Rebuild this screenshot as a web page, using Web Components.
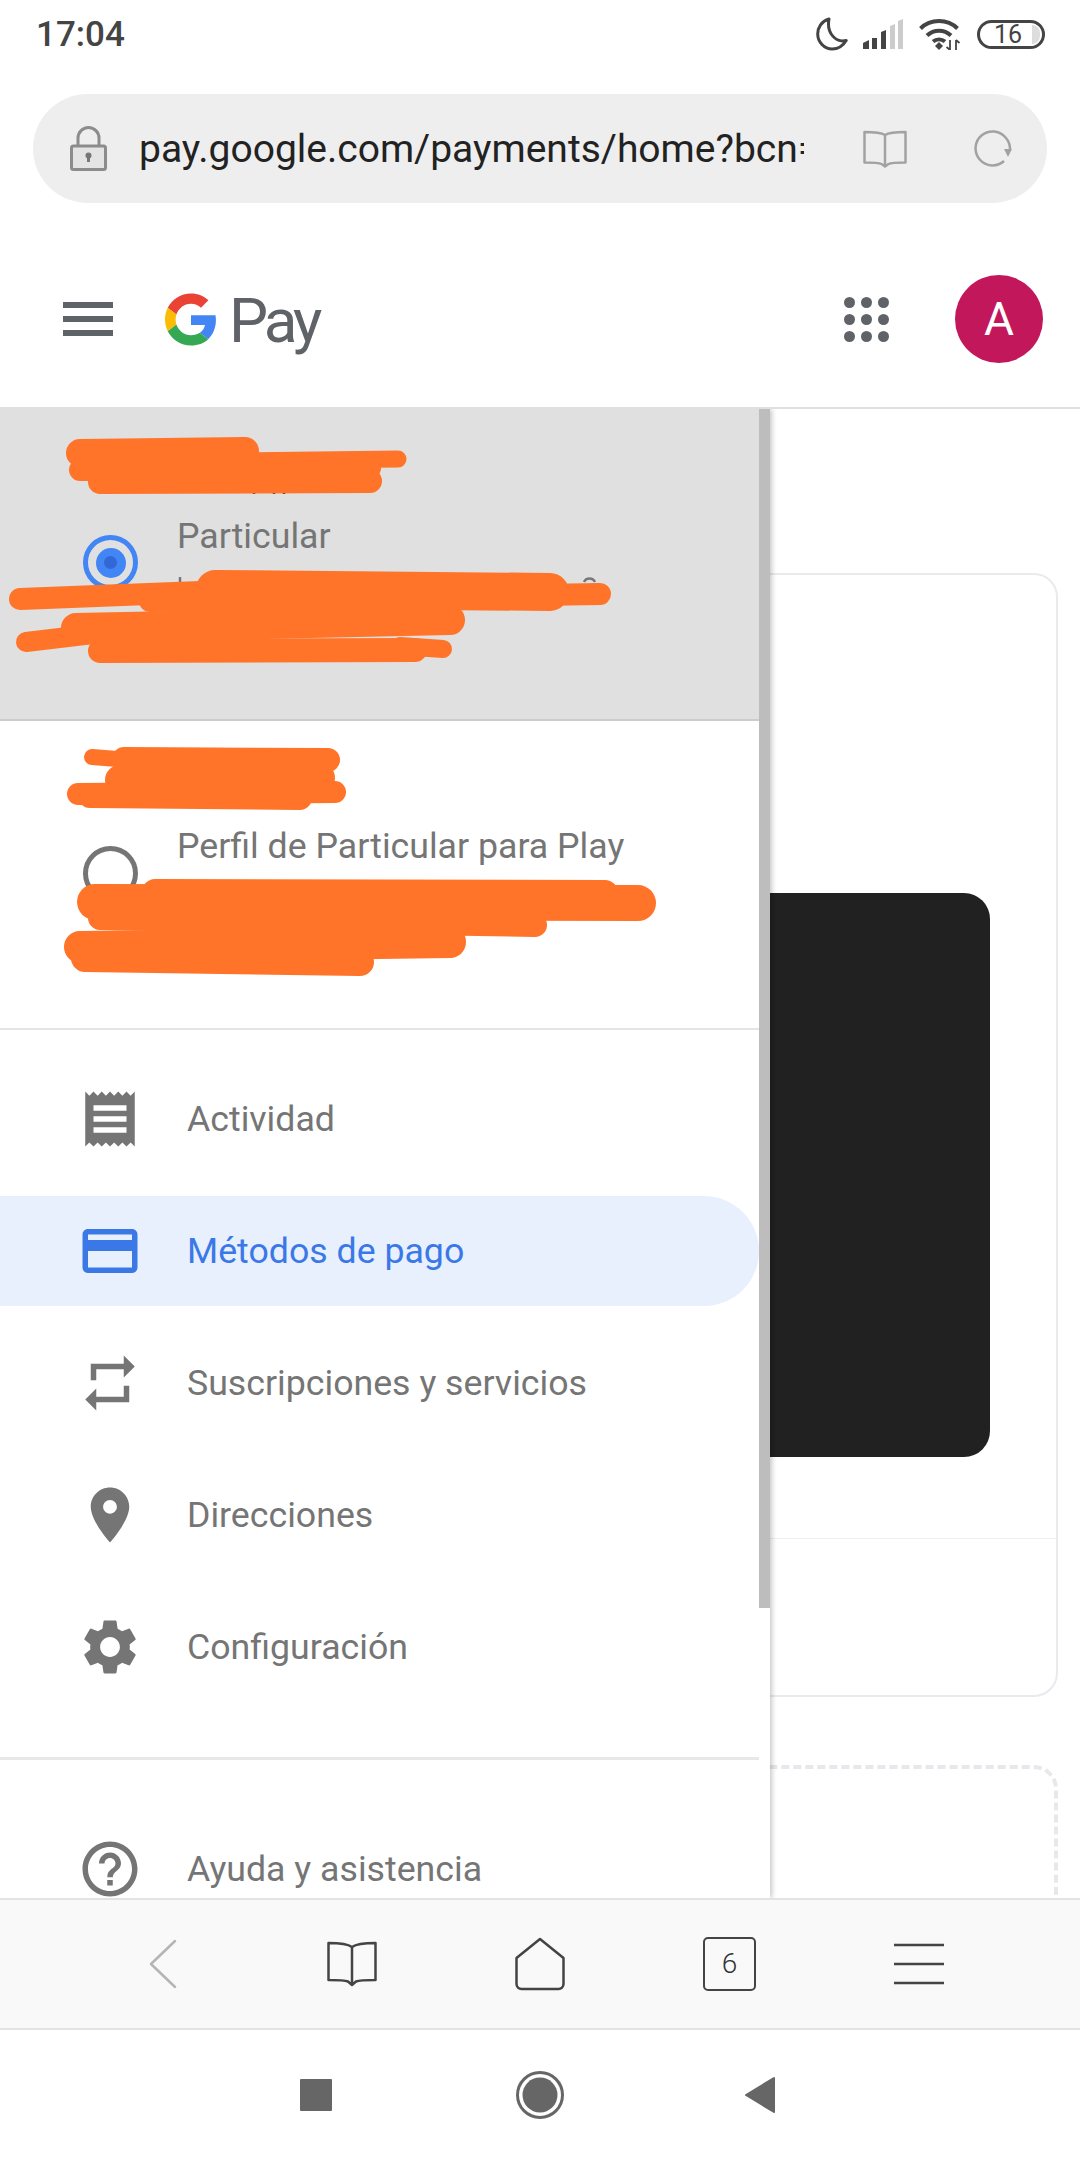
<!DOCTYPE html>
<html>
<head>
<meta charset="utf-8">
<title>Google Pay</title>
<style>
  html, body { margin: 0; padding: 0; background: #fff; }
  body { width: 1080px; height: 2160px; overflow: hidden; font-family: Roboto, "Liberation Sans", sans-serif; }
</style>
</head>
<body>
<phone-shell>
  <status-bar></status-bar>
  <url-bar>pay.google.com/payments/home?bcn=</url-bar>
  <pay-header></pay-header>
  <page-area>
    <pay-content></pay-content>
    <nav-drawer>
      <drawer-account selected label="Particular"></drawer-account>
      <drawer-account label="Perfil de Particular para Play"></drawer-account>
      <drawer-item icon="receipt">Actividad</drawer-item>
      <drawer-item icon="card" active>Métodos de pago</drawer-item>
      <drawer-item icon="repeat">Suscripciones y servicios</drawer-item>
      <drawer-item icon="place">Direcciones</drawer-item>
      <drawer-item icon="settings">Configuración</drawer-item>
      <drawer-rule></drawer-rule>
      <drawer-item icon="help">Ayuda y asistencia</drawer-item>
    </nav-drawer>
    <scribble-marks></scribble-marks>
  </page-area>
  <browser-toolbar></browser-toolbar>
  <system-nav></system-nav>
</phone-shell>

<script>
// small helper so every element below is just css + markup
function defineEl(name, html) {
  class El extends HTMLElement {
    constructor() {
      super();
      const shadow = this.attachShadow({ mode: 'open' });
      shadow.innerHTML = typeof html === 'function' ? html(this) : html;
    }
    connectedCallback() {
      if (typeof html === 'function') this.shadowRoot.innerHTML = html(this);
    }
  }
  customElements.define(name, El);
}

const ICONS = {
  receipt: 'M18 17H6v-2h12v2zm0-4H6v-2h12v2zm0-4H6V7h12v2zM3 22l1.5-1.5L6 22l1.5-1.5L9 22l1.5-1.5L12 22l1.5-1.5L15 22l1.5-1.5L18 22l1.5-1.5L21 22V2l-1.5 1.5L18 2l-1.5 1.5L15 2l-1.5 1.5L12 2l-1.5 1.5L9 2 7.5 3.5 6 2 4.5 3.5 3 2v20z',
  card: 'M20 4H4c-1.11 0-1.99.89-1.99 2L2 18c0 1.11.89 2 2 2h16c1.11 0 2-.89 2-2V6c0-1.11-.89-2-2-2zm0 14H4v-6h16v6zm0-10H4V6h16v2z',
  repeat: 'M7 7h10v3l4-4-4-4v3H5v6h2V7zm10 10H7v-3l-4 4 4 4v-3h12v-6h-2v4z',
  place: 'M12 2C8.13 2 5 5.13 5 9c0 5.25 7 13 7 13s7-7.75 7-13c0-3.87-3.13-7-7-7zm0 9.5c-1.38 0-2.5-1.12-2.5-2.5s1.12-2.5 2.5-2.5 2.5 1.12 2.5 2.5-1.12 2.5-2.5 2.5z',
  settings: 'M19.14 12.94c.04-.3.06-.61.06-.94 0-.32-.02-.64-.07-.94l2.03-1.58c.18-.14.23-.41.12-.61l-1.92-3.32c-.12-.22-.37-.29-.59-.22l-2.39.96c-.5-.38-1.03-.7-1.62-.94l-.36-2.54c-.04-.24-.24-.41-.48-.41h-3.84c-.24 0-.43.17-.47.41l-.36 2.54c-.59.24-1.13.57-1.62.94l-2.39-.96c-.22-.08-.47 0-.59.22L2.74 8.87c-.12.21-.08.47.12.61l2.03 1.58c-.05.3-.09.63-.09.94s.02.64.07.94l-2.03 1.58c-.18.14-.23.41-.12.61l1.92 3.32c.12.22.37.29.59.22l2.39-.96c.5.38 1.03.7 1.62.94l.36 2.54c.05.24.24.41.48.41h3.84c.24 0 .44-.17.47-.41l.36-2.54c.59-.24 1.13-.56 1.62-.94l2.39.96c.22.08.47 0 .59-.22l1.92-3.32c.12-.22.07-.47-.12-.61l-2.01-1.58zM12 15.6c-1.98 0-3.6-1.62-3.6-3.6s1.62-3.6 3.6-3.6 3.6 1.62 3.6 3.6-1.62 3.6-3.6 3.6z',
  help: 'M11 18h2v-2h-2v2zm1-16C6.48 2 2 6.48 2 12s4.48 10 10 10 10-4.48 10-10S17.52 2 12 2zm0 18c-4.41 0-8-3.59-8-8s3.59-8 8-8 8 3.59 8 8-3.59 8-8 8zm0-14c-2.21 0-4 1.79-4 4h2c0-1.1.9-2 2-2s2 .9 2 2c0 2-3 1.75-3 5h2c0-2.25 3-2.5 3-5 0-2.21-1.79-4-4-4z'
};

defineEl('phone-shell', `
  <style>
    :host { display: flex; flex-direction: column; width: 1080px; height: 2160px; background: #fff; overflow: hidden; }
  </style>
  <slot></slot>`);

defineEl('status-bar', `
  <style>
    :host { display: flex; align-items: center; height: 68px; box-sizing: border-box; padding: 0 35px 0 36px; color: #444; flex: none; }
    .time { font: 500 35px Roboto, sans-serif; margin-right: auto; }
    svg { display: block; }
    .moon { margin-right: 15px; }
    .signal { margin-right: 16px; }
    .wifi { margin-right: 16px; }
    .batt { position: relative; width: 68px; height: 29px; box-sizing: border-box; border: 3px solid #444; border-radius: 15px;
      font: 400 25px/23px Roboto, sans-serif; text-align: center; padding-right: 6px; overflow: hidden; }
    .batt i { position: absolute; right: 2px; top: 2px; bottom: 2px; width: 8px; background: #ddd; border-radius: 0 8px 8px 0; }
  </style>
  <span class="time">17:04</span>
  <svg class="moon" width="32" height="34" viewBox="0 0 32 34" fill="none" stroke="#444" stroke-width="3" stroke-linejoin="round">
    <path d="M13 2C5.5 4 1.7 10.5 1.7 17c0 8 6.5 15 14.500 15 6 0 11-3.500 14-8.500-10 2.500-20-7-17.200-21.500z"/>
  </svg>
  <svg class="signal" width="40" height="30" viewBox="0 0 40 30">
    <path d="M0 24l6-3v9H0z" fill="#444"/><path d="M9 19h5v11H9z" fill="#444"/><path d="M18 13l5-2v19h-5z" fill="#444"/>
    <path d="M27 7l5-2v25h-5z" fill="#ccc"/><path d="M35 2l5-2v30h-5z" fill="#ccc"/>
  </svg>
  <svg class="wifi" width="42" height="31" viewBox="0 0 42 31" fill="none" stroke="#444" stroke-width="4">
    <path d="M1.500 9.500C11.500-.500 28.500-.500 38.500 9.500"/>
    <path d="M8 16.500c7-6.500 17-6.500 24 0"/>
    <path d="M14 22.500c3.500-2.800 8.500-2.800 12 0"/>
    <path d="M20 23l4 4-4 4-4-4z" fill="#444" stroke="none"/>
    <path d="M31 21v10M27.500 28l3.500 3M37 31V21M40.500 24L37 21" stroke-width="1.800"/>
  </svg>
  <div class="batt">16<i></i></div>`);

defineEl('url-bar', `
  <style>
    :host { display: flex; align-items: center; flex: none; height: 109px; margin: 26px 33px 0 33px; border-radius: 55px; background: #eee; position: relative; }
    svg { display: block; flex: none; }
    .lock { margin-left: 37px; }
    .url { width: 665px; margin-left: 32px; overflow: hidden; white-space: nowrap; font: 400 39px Roboto, sans-serif; color: #222; flex: none; }
    .book { margin-left: 59px; }
    .reload { margin-left: 67px; }
  </style>
  <svg class="lock" width="37" height="45" viewBox="0 0 37 45" fill="none" stroke="#8c8c8c" stroke-width="3">
    <path d="M8 20V12a10.500 10.500 0 0 1 21 0v8"/>
    <rect x="1.500" y="20" width="34" height="23.500" rx="2" fill="#e4e4e4"/>
    <circle cx="18.500" cy="29.500" r="3" fill="#777" stroke="none"/><path d="M17 30h3v6h-3z" fill="#777" stroke="none"/>
  </svg>
  <span class="url"><slot></slot></span>
  <svg class="book" width="44" height="38" viewBox="0 0 44 38" fill="none" stroke="#a2a2a2" stroke-width="2.500" stroke-linejoin="round">
    <path d="M22 5C18 2.500 10 2 1.500 2v30.500c8 0 15 .5 17 1.500L22 36.500 25.500 34c2-1 9-1.500 17-1.500V2C34 2 26 2.500 22 5zM22 5v31"/>
  </svg>
  <svg class="reload" width="38" height="38" viewBox="0 0 38 38" fill="none" stroke="#a2a2a2" stroke-width="2.500">
    <path d="M30 31a17 17 0 1 1 2-23 17 17 0 0 1 4 11"/>
    <path d="M30 19h8l-4 8z" fill="#a2a2a2" stroke="none"/>
  </svg>`);

defineEl('pay-header', `
  <style>
    :host { display: flex; align-items: center; flex: none; height: 206px; box-sizing: border-box; padding: 28px 37px 0 63px; border-bottom: 2px solid #e0e0e0; position: relative; }
    svg { display: block; flex: none; }
    .burger { width: 50px; height: 34px; display: flex; flex-direction: column; justify-content: space-between; margin-right: 52px; }
    .burger i { display: block; height: 6px; background: #5f6368; }
    .pay { font: 400 62px/63px Roboto, sans-serif; color: #5f6368; margin-left: 12px; letter-spacing: -4px; padding-top: 2px; }
    .dots { display: grid; grid-template-columns: repeat(3, 11px); grid-auto-rows: 11px; gap: 6px; margin-left: auto; margin-right: 66px; }
    .dots i { display: block; border-radius: 50%; background: #5f6368; }
    .avatar { width: 88px; height: 88px; border-radius: 50%; background: #c2185b; color: #fff; display: flex; align-items: center; justify-content: center; font: 400 46px Roboto, sans-serif; flex: none; }
  </style>
  <div class="burger"><i></i><i></i><i></i></div>
  <svg width="52" height="53" viewBox="0 0 48 48">
    <path fill="#EA4335" d="M24 9.500c3.540 0 6.710 1.220 9.210 3.600l6.850-6.850C35.900 2.380 30.470 0 24 0 14.620 0 6.510 5.380 2.560 13.220l7.980 6.190C12.430 13.720 17.740 9.500 24 9.500z"/>
    <path fill="#4285F4" d="M46.980 24.550c0-1.570-.15-3.090-.38-4.550H24v9.020h12.940c-.58 2.960-2.260 5.480-4.780 7.180l7.730 6c4.510-4.180 7.090-10.360 7.090-17.650z"/>
    <path fill="#FBBC05" d="M10.530 28.590c-.48-1.450-.76-2.990-.76-4.590s.27-3.140.76-4.590l-7.980-6.190C.92 16.460 0 20.120 0 24c0 3.880.92 7.540 2.560 10.780l7.970-6.190z"/>
    <path fill="#34A853" d="M24 48c6.480 0 11.930-2.130 15.890-5.810l-7.730-6c-2.150 1.450-4.920 2.300-8.160 2.300-6.260 0-11.570-4.220-13.470-9.910l-7.980 6.190C6.510 42.620 14.620 48 24 48z"/>
  </svg>
  <span class="pay">Pay</span>
  <div class="dots"><i></i><i></i><i></i><i></i><i></i><i></i><i></i><i></i><i></i></div>
  <div class="avatar">A</div>`);

defineEl('page-area', `
  <style>
    :host { display: block; position: relative; flex: 1 1 0; min-height: 0; overflow: hidden; }
  </style>
  <slot></slot>`);

// what shows to the right of the drawer
defineEl('pay-content', `
  <style>
    :host { display: flex; flex-direction: column; padding: 164px 22px 0 24px; box-sizing: border-box; height: 100%; overflow: hidden; }
    .card { flex: none; height: 1124px; box-sizing: border-box; border: 2px solid #e8eaed; border-radius: 24px; display: flex; flex-direction: column; }
    .top { flex: none; height: 964px; box-sizing: border-box; padding: 318px 66px 0 66px; border-bottom: 1px solid #eeeff1; }
    .dark { height: 564px; background: #212121; border-radius: 26px; }
    .add { flex: none; height: 400px; margin-top: 68px; box-sizing: border-box; border: 4px dashed #e6e8eb; border-radius: 24px; }
  </style>
  <div class="card"><div class="top"><div class="dark"></div></div></div>
  <div class="add"></div>`);

defineEl('nav-drawer', `
  <style>
    :host { display: block; position: absolute; left: 0; top: 0; bottom: 0; width: 770px; background: #fff; overflow: hidden; box-shadow: 2px 0 5px rgba(0,0,0,.22); padding-right: 11px; box-sizing: border-box; }
    .bar { position: absolute; right: 0; top: 0; width: 11px; height: 1199px; background: #bdbdbd; }
  </style>
  <slot></slot>
  <div class="bar"></div>`);

defineEl('drawer-account', (host) => `
  <style>
    :host { display: block; position: relative; height: ${host.hasAttribute('selected') ? 312 : 309}px; box-sizing: border-box; border-bottom: ${host.hasAttribute('selected') ? '2px solid #ccc' : '2px solid #e4e4e4'}; background: ${host.hasAttribute('selected') ? '#e0e0e0' : '#fff'}; }
    .row { display: flex; align-items: flex-start; padding: ${host.hasAttribute('selected') ? 108 : 106}px 0 0 83px; }
    .radio { flex: none; width: 55px; height: 55px; box-sizing: border-box; border-radius: 50%; border: 5px solid #757575; margin-top: ${host.hasAttribute('selected') ? 18 : 19}px; display: flex; align-items: center; justify-content: center; }
    :host([selected]) .radio { border-color: #4285f4; }
    .radio i { display: none; }
    :host([selected]) .radio i { display: flex; width: 30px; height: 30px; border-radius: 50%; background: #4285f4; align-items: center; justify-content: center; }
    .radio b { display: block; width: 13px; height: 13px; border-radius: 50%; background: #3367d6; }
    .label { margin-left: 39px; font: 400 35.700px/38px Roboto, sans-serif; color: #757575; white-space: nowrap; }
  </style>
  <div class="row">
    <div class="radio"><i><b></b></i></div>
    <div class="label">${host.getAttribute('label') || ''}</div>
  </div>`);

defineEl('drawer-item', (host) => `
  <style>
    :host { display: flex; align-items: center; height: 110px; margin: 11px 0 22px; border-radius: 0 55px 55px 0; color: #757575; }
    :host(:first-of-type) { margin-top: 34px; }
    :host([active]) { background: #e8f0fe; color: #3b78e7; }
    svg { display: block; flex: none; margin-left: 77px; width: 66px; height: 66px; fill: currentColor; }
    .label { margin-left: 44px; font: 400 35.700px Roboto, sans-serif; white-space: nowrap; }
  </style>
  <svg viewBox="0 0 24 24"><path d="${ICONS[host.getAttribute('icon')] || ''}"/></svg>
  <span class="label"><slot></slot></span>`);

defineEl('drawer-rule', `
  <style>
    :host { display: block; height: 3px; background: #e8e8e8; margin: 55px 0 54px; }
  </style>`);

// orange marker on top of the account rows, drawn in page coordinates
defineEl('scribble-marks', `
  <style>
    :host { display: block; position: absolute; left: 0; top: 0; width: 771px; height: 620px; pointer-events: none; }
    svg { display: block; }
    .ink { fill: none; stroke: #ff7428; stroke-linecap: round; stroke-linejoin: round; }
    .peek { fill: none; stroke: #777; stroke-width: 2.500; }
  </style>
  <svg width="771" height="620" viewBox="0 409 771 620">
    <path class="peek" d="M180 577v8M584 582a6 6 0 0 1 11 0"/>
    <path class="peek" style="stroke:#333" d="M254 490v4M274 490v4M284 490v4"/>
    <g class="ink">
    <path stroke-width="28" d="M80 453L245 451"/>
    <path stroke-width="17" d="M240 461L398 459"/>
    <path stroke-width="22" d="M80 470L370 468"/>
    <path stroke-width="24" d="M100 482L370 481"/>
    <path stroke-width="38" d="M215 589L550 592"/>
    <path stroke-width="22" d="M20 599L200 592"/>
    <path stroke-width="22" d="M150 601L600 594"/>
    <path stroke-width="30" d="M76 628L450 620"/>
    <path stroke-width="20" d="M26 642L110 632"/>
    <path stroke-width="24" d="M100 651L415 650"/>
    <path stroke-width="18" d="M400 646L443 649"/>
    <path stroke-width="24" d="M124 759L328 760"/>
    <path stroke-width="16" d="M92 757L130 760"/>
    <path stroke-width="30" d="M120 780L320 778"/>
    <path stroke-width="22" d="M78 794L335 792"/>
    <path stroke-width="24" d="M90 796L300 798"/>
    <path stroke-width="26" d="M155 892L605 893"/>
    <path stroke-width="36" d="M95 902L638 903"/>
    <path stroke-width="24" d="M100 918L535 925"/>
    <path stroke-width="32" d="M80 947L450 942"/>
    <path stroke-width="28" d="M85 958L360 962"/>
    </g>
  </svg>`);

defineEl('browser-toolbar', `
  <style>
    :host { display: grid; grid-template-columns: repeat(5, 189px); justify-items: center; align-items: center; flex: none; height: 132px; box-sizing: border-box; padding-left: 68px; background: #f9f9f9; border-top: 2px solid #e3e3e3; border-bottom: 2px solid #e3e3e3; }
    svg { display: block; }
    .home { margin-right: 2px; }
    .tab { width: 53px; height: 54px; box-sizing: border-box; border: 2.500px solid #444; border-radius: 5px; font: 300 28px/49px Roboto, sans-serif; text-align: center; color: #333; }
  </style>
  <svg width="28" height="50" viewBox="0 0 28 50" fill="none" stroke="#b5b5b5" stroke-width="2.500" stroke-linecap="round" stroke-linejoin="round"><path d="M26 2L2 25l24 23"/></svg>
  <svg width="50" height="46" viewBox="0 0 50 46" fill="none" stroke="#444" stroke-width="2.500" stroke-linejoin="round"><path d="M25 6C21 3 11 2 1.500 2v37c9 0 17 .5 19.500 1.500l4 3.500 4-3.500c2.500-1 10.500-1.500 19.500-1.500V2C39 2 29 3 25 6zM25 6v38"/></svg>
  <svg class="home" width="50" height="54" viewBox="0 0 50 54" fill="none" stroke="#444" stroke-width="2.500" stroke-linejoin="round"><path d="M25 2L48.500 21v26a5 5 0 0 1-5 5h-37a5 5 0 0 1-5-5V21z"/></svg>
  <div class="tab">6</div>
  <svg width="50" height="42" viewBox="0 0 50 42" fill="none" stroke="#444" stroke-width="2.500"><path d="M0 2h50M0 21h50M0 40h50"/></svg>`);

defineEl('system-nav', `
  <style>
    :host { display: grid; grid-template-columns: repeat(3, 222px); justify-content: center; justify-items: center; align-items: center; flex: none; height: 130px; box-sizing: border-box; }
    .sq { width: 32px; height: 32px; background: #666; border-radius: 1px; margin-right: 4px; }
    svg { display: block; }
    .tri { margin-right: 4px; }
  </style>
  <div class="sq"></div>
  <svg width="48" height="48" viewBox="0 0 48 48"><circle cx="24" cy="24" r="22.500" fill="none" stroke="#666" stroke-width="3"/><circle cx="24" cy="24" r="17.500" fill="#666"/></svg>
  <svg class="tri" width="32" height="38" viewBox="0 0 32 38"><path d="M30 2L2 19l28 17z" fill="#666" stroke="#666" stroke-width="2" stroke-linejoin="round"/></svg>`);
</script>
</body>
</html>
